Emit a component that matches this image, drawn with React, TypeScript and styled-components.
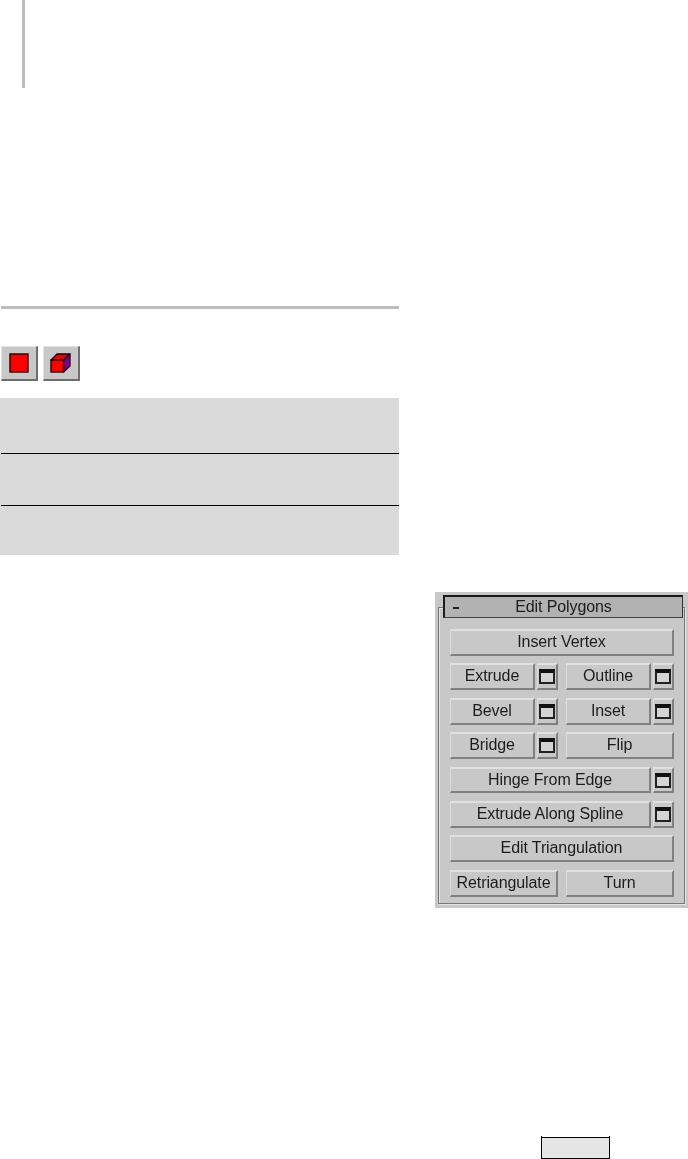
import React from 'react'
import styled, { createGlobalStyle } from 'styled-components'

const GlobalStyle = createGlobalStyle`
  html, body {
    margin: 0;
    padding: 0;
    background: #fff;
  }
`

const Page = styled.div`
  position: relative;
  width: 688px;
  height: 1159px;
  overflow: hidden;
  font-family: 'Liberation Sans', Arial, sans-serif;
`

const MarginBar = styled.div`
  width: 3px;
  height: 88px;
  margin-left: 22px;
  background: #bdbdbd;
`

const Rule = styled.div`
  width: 398px;
  height: 3px;
  margin: 218px 0 0 1px;
  background: #bdbdbd;
`

const Toolbar = styled.div`
  display: flex;
  gap: 5px;
  margin: 37px 0 0 1px;
`

const ToolButton = styled.div`
  display: flex;
  align-items: center;
  justify-content: center;
  box-sizing: border-box;
  width: 37px;
  height: 35px;
  background: #c8c8c8;
  border-style: solid;
  border-width: 1px 2px 2px 1px;
  border-color: #e2e2e2 #6e6e6e #6e6e6e #e2e2e2;
`

const Table = styled.div`
  width: 399px;
  height: 157px;
  margin-top: 17px;
  display: grid;
  grid-template-rows: 56px 52px 49px;
  background: #dadada;
`

const TableRow = styled.div<{ $lined?: boolean }>`
  margin-left: 1px;
  border-bottom: ${({ $lined }) => ($lined ? '1px solid #000' : 'none')};
`

const Panel = styled.div`
  box-sizing: border-box;
  width: 253px;
  height: 316px;
  margin: 37px 0 0 435px;
  padding: 15px 3px 4px;
  background: #c8c8c8;
  filter: blur(0.35px);
`

const Group = styled.div`
  box-sizing: border-box;
  height: 297px;
  border: 1px solid #777;
  box-shadow: inset 1px 1px 0 #e4e4e4, 1px 1px 0 #e4e4e4;
  padding: 0 10px 7px 11px;
`

const TitleBar = styled.div`
  display: flex;
  align-items: center;
  justify-content: center;
  position: relative;
  box-sizing: border-box;
  height: 23px;
  margin: -13px -9px 11px -7px;
  padding-bottom: 1px;
  background: #b2b2b2;
  border-style: solid;
  border-width: 2px 1px 1px 2px;
  border-color: #1a1a1a #333 #444 #1a1a1a;
  color: #1c1c1c;
  font-size: 16px;
  letter-spacing: -0.1px;
`

const Minus = styled.span`
  position: absolute;
  left: 8px;
  top: 10px;
  width: 6px;
  height: 2px;
  background: #222;
`

const Rows = styled.div`
  display: flex;
  flex-direction: column;
  gap: 7.5px;
`

const Row = styled.div`
  display: flex;
  height: 26.9px;
  gap: 8px;
`

const Cell = styled.div`
  display: flex;
  flex: 1 1 0;
  min-width: 0;
  gap: 2px;
`

const Button = styled.div`
  display: flex;
  align-items: center;
  justify-content: center;
  flex: 1 1 0;
  min-width: 0;
  box-sizing: border-box;
  padding-bottom: 1px;
  background: #c8c8c8;
  border-style: solid;
  border-width: 2px 2px 2px 1px;
  border-color: #e0e0e0 #808080 #808080 #dcdcdc;
  color: #1c1c1c;
  font-size: 16px;
  letter-spacing: -0.1px;
  white-space: nowrap;
`

const OptionButton = styled(Button)`
  flex: 0 0 21px;
  padding-bottom: 0;
`

const WindowIcon = styled.span`
  display: block;
  box-sizing: border-box;
  width: 16px;
  height: 15px;
  background: #d4d4d4;
  border: 2px solid #222;
  border-top: 4px solid #111;
`

const PageTab = styled.div`
  position: absolute;
  left: 541px;
  top: 1137px;
  box-sizing: border-box;
  width: 69px;
  height: 22px;
  background: #e5e5e5;
  border: 1px solid #000;
`

const TabTick = styled.span<{ $side: 'left' | 'right' }>`
  position: absolute;
  top: -2px;
  ${({ $side }) => ($side === 'left' ? 'left: -1px;' : 'right: -1px;')}
  width: 1px;
  height: 2px;
  background: #000;
`

const FaceIcon = () => (
  <svg width="20" height="20" viewBox="0 0 20 20">
    <rect x="1" y="1" width="18" height="18" fill="#ff0000" stroke="#2a0000" strokeWidth="1.4" />
  </svg>
)

const CubeIcon = () => (
  <svg width="22" height="21" viewBox="0 0 22 21">
    <path d="M1 7 L7 1 L20 1 L13.5 7 Z" fill="#ee0000" stroke="#220000" strokeWidth="1.3" strokeLinejoin="round" />
    <path d="M13.5 7 L20 1 L20 13 L13.5 19 Z" fill="#800080" stroke="#220022" strokeWidth="1.3" strokeLinejoin="round" />
    <rect x="1" y="7" width="12.5" height="12" fill="#ff0000" stroke="#220000" strokeWidth="1.4" />
  </svg>
)

const PolyButton = ({ label }: { label: string }) => (
  <Cell>
    <Button>{label}</Button>
    <OptionButton>
      <WindowIcon />
    </OptionButton>
  </Cell>
)

const App = () => (
  <Page>
    <GlobalStyle />
    <MarginBar />
    <Rule />
    <Toolbar>
      <ToolButton>
        <FaceIcon />
      </ToolButton>
      <ToolButton>
        <CubeIcon />
      </ToolButton>
    </Toolbar>
    <Table>
      <TableRow $lined />
      <TableRow $lined />
      <TableRow />
    </Table>
    <Panel>
      <Group>
        <TitleBar>
          <Minus />
          Edit Polygons
        </TitleBar>
        <Rows>
          <Row>
            <Button>Insert Vertex</Button>
          </Row>
          <Row>
            <PolyButton label="Extrude" />
            <PolyButton label="Outline" />
          </Row>
          <Row>
            <PolyButton label="Bevel" />
            <PolyButton label="Inset" />
          </Row>
          <Row>
            <PolyButton label="Bridge" />
            <Cell>
              <Button>Flip</Button>
            </Cell>
          </Row>
          <Row>
            <PolyButton label="Hinge From Edge" />
          </Row>
          <Row>
            <PolyButton label="Extrude Along Spline" />
          </Row>
          <Row>
            <Button>Edit Triangulation</Button>
          </Row>
          <Row>
            <Cell>
              <Button>Retriangulate</Button>
            </Cell>
            <Cell>
              <Button>Turn</Button>
            </Cell>
          </Row>
        </Rows>
      </Group>
    </Panel>
    <PageTab>
      <TabTick $side="left" />
      <TabTick $side="right" />
    </PageTab>
  </Page>
)

export default App
